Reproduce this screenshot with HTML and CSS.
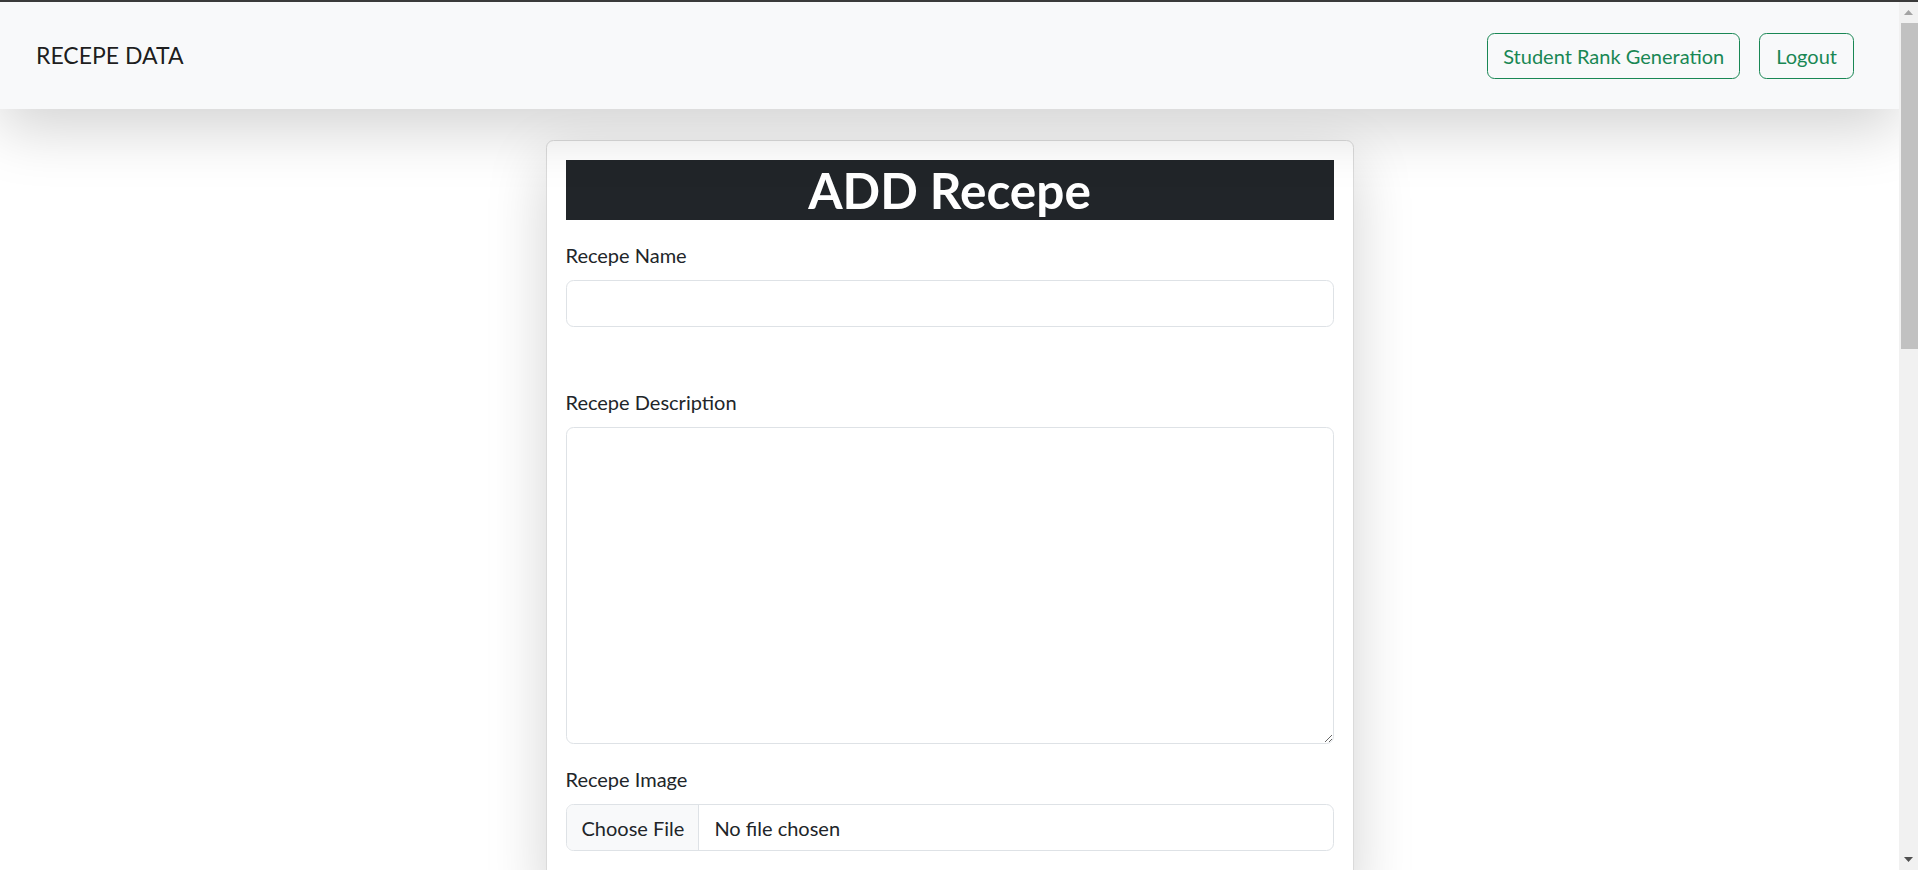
FILE: index.html
```html
<!DOCTYPE html>
<html lang="en">
<head>
<meta charset="utf-8">
<title>RECEPE DATA</title>
<link rel="stylesheet" href="styles.css">
</head>
<body>
<div class="topline"></div>
<div class="window">
  <div class="page">
    <nav class="navbar">
      <a class="brand" href="#">RECEPE DATA</a>
      <div class="nav-actions">
        <a class="btn-outline" href="#">Student Rank Generation</a>
        <a class="btn-outline" href="#">Logout</a>
      </div>
    </nav>
    <main class="content">
      <form class="card">
        <h1 class="card-title">ADD Recepe</h1>
        <div class="field field-spaced">
          <label class="field-label" for="name">Recepe Name</label>
          <input class="field-control" id="name" type="text">
        </div>
        <div class="field">
          <label class="field-label" for="desc">Recepe Description</label>
          <textarea class="field-control field-area" id="desc"></textarea>
        </div>
        <div class="field">
          <span class="field-label">Recepe Image</span>
          <label class="file-field">
            <input class="file-native" type="file">
            <span class="file-btn">Choose File</span>
            <span class="file-name">No file chosen</span>
          </label>
        </div>
      </form>
    </main>
  </div>
  <div class="scrollbar">
    <div class="sb-arrow">
      <svg width="9" height="5" viewBox="0 0 9 5"><polygon points="0,5 4.5,0 9,5" fill="#a3a3a3"/></svg>
    </div>
    <div class="sb-track">
      <div class="sb-thumb"></div>
    </div>
    <div class="sb-arrow">
      <svg width="9" height="5" viewBox="0 0 9 5"><polygon points="0,0 9,0 4.5,5" fill="#505050"/></svg>
    </div>
  </div>
</div>
</body>
</html>
```
FILE: styles.css
```css
* { box-sizing: border-box; }

html, body {
  margin: 0;
  height: 870px;
  overflow: hidden;
}

body {
  font-family: Lato, "Liberation Sans", sans-serif;
  font-size: 20px;
  line-height: 1.5;
  color: #212529;
  background: #fff;
  display: flex;
  flex-direction: column;
}

.topline {
  height: 2px;
  background: #3a3a3a;
  flex: none;
}

.window {
  flex: 1;
  display: flex;
  min-height: 0;
}

.page {
  flex: 1;
  min-width: 0;
  overflow: hidden;
  background: #fff;
}

/* navbar */
.navbar {
  position: relative;
  z-index: 2;
  height: 107px;
  background: #f8f9fa;
  box-shadow: 0 20px 60px rgba(0, 0, 0, 0.175);
  display: flex;
  align-items: center;
  justify-content: space-between;
  padding: 0 45px 0 36px;
}

.brand {
  font-size: 23px;
  color: rgba(0, 0, 0, 0.9);
  text-decoration: none;
  line-height: 1.5;
}

.nav-actions {
  display: flex;
  gap: 19px;
  align-items: center;
}

.btn-outline {
  display: inline-block;
  font-size: 20px;
  line-height: 30px;
  padding: 7px 15px;
  border: 1px solid #198754;
  border-radius: 7.5px;
  color: #198754;
  text-decoration: none;
  background: transparent;
}

.btn-outline:last-child {
  padding: 7px 16px;
}

/* content */
.content {
  padding-top: 30.5px;
}

.card {
  width: 808px;
  margin: 0 auto;
  background: #fff;
  border: 1px solid #dadada;
  border-radius: 7.5px;
  padding: 19px 19px 20px;
  box-shadow: 0 20px 60px rgba(0, 0, 0, 0.175);
  position: relative;
  z-index: 1;
}

.card-title {
  margin: 0 0 20.5px;
  background: #212529;
  color: #fff;
  text-align: center;
  font-size: 49.5px;
  font-weight: 700;
  line-height: 60px;
  height: 60px;
  overflow: visible;
}

.field {
  margin-bottom: 20px;
}

.field-spaced {
  margin-bottom: 60px;
}

.field-label {
  display: block;
  margin-bottom: 10px;
  line-height: 30px;
}

.field-control {
  display: block;
  width: 100%;
  height: 47px;
  font-family: inherit;
  font-size: 20px;
  line-height: 30px;
  padding: 7.5px 15px;
  border: 1px solid #dee2e6;
  border-radius: 7.5px;
  background: #fff;
  color: #212529;
  outline: none;
}

.field-area {
  height: 317px;
  resize: vertical;
}

.file-field {
  display: flex;
  align-items: stretch;
  height: 47px;
  border: 1px solid #dee2e6;
  border-radius: 7.5px;
  overflow: hidden;
  background: #fff;
  cursor: pointer;
}

.file-native {
  display: none;
}

.file-btn {
  display: flex;
  align-items: center;
  padding: 0 14px 0 15px;
  background: #f8f9fa;
  border-right: 1px solid #dee2e6;
  line-height: 30px;
}

.file-name {
  display: flex;
  align-items: center;
  padding-left: 15px;
  line-height: 30px;
}

/* fake window scrollbar */
.scrollbar {
  width: 19px;
  flex: none;
  background: #f1f1f1;
  display: flex;
  flex-direction: column;
}

.sb-arrow {
  height: 21px;
  display: flex;
  align-items: center;
  justify-content: center;
  flex: none;
}

.sb-arrow svg { display: block; }

.sb-track {
  flex: 1;
  padding-left: 2px;
}

.sb-thumb {
  height: 326px;
  background: #c1c1c1;
}
```
